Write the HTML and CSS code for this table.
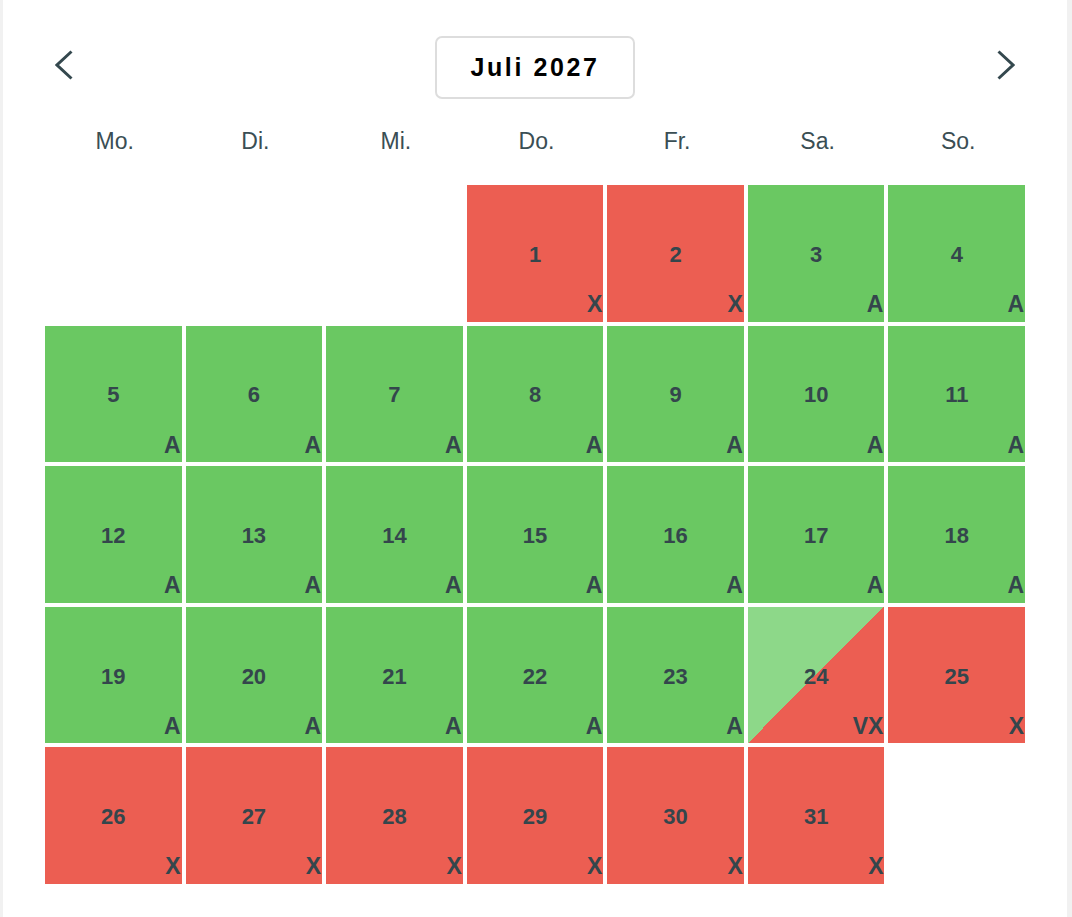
FILE: index.html
```html
<!DOCTYPE html>
<html lang="de">
<head>
<meta charset="utf-8">
<title>Kalender Juli 2027</title>
<link rel="stylesheet" href="styles.css">
</head>
<body>
<div class="card">
  <div class="header">
    <button class="nav" aria-label="Vorheriger Monat">
      <svg width="18" height="30" viewBox="0 0 18 30"><polyline points="16.5,1.5 2,15 16.5,28.5" fill="none" stroke="#34484e" stroke-width="3"/></svg>
    </button>
    <div class="month">Juli 2027</div>
    <button class="nav" aria-label="Nächster Monat">
      <svg width="18" height="30" viewBox="0 0 18 30"><polyline points="1.5,1.5 16,15 1.5,28.5" fill="none" stroke="#34484e" stroke-width="3"/></svg>
    </button>
  </div>
  <div class="weekdays">
    <div>Mo.</div><div>Di.</div><div>Mi.</div><div>Do.</div><div>Fr.</div><div>Sa.</div><div>So.</div>
  </div>
  <div class="grid">
    <div class="empty"></div><div class="empty"></div><div class="empty"></div>
    <div class="day red"><span class="num">1</span><span class="tag">X</span></div>
    <div class="day red"><span class="num">2</span><span class="tag">X</span></div>
    <div class="day green"><span class="num">3</span><span class="tag">A</span></div>
    <div class="day green"><span class="num">4</span><span class="tag">A</span></div>
    <div class="day green"><span class="num">5</span><span class="tag">A</span></div>
    <div class="day green"><span class="num">6</span><span class="tag">A</span></div>
    <div class="day green"><span class="num">7</span><span class="tag">A</span></div>
    <div class="day green"><span class="num">8</span><span class="tag">A</span></div>
    <div class="day green"><span class="num">9</span><span class="tag">A</span></div>
    <div class="day green"><span class="num">10</span><span class="tag">A</span></div>
    <div class="day green"><span class="num">11</span><span class="tag">A</span></div>
    <div class="day green"><span class="num">12</span><span class="tag">A</span></div>
    <div class="day green"><span class="num">13</span><span class="tag">A</span></div>
    <div class="day green"><span class="num">14</span><span class="tag">A</span></div>
    <div class="day green"><span class="num">15</span><span class="tag">A</span></div>
    <div class="day green"><span class="num">16</span><span class="tag">A</span></div>
    <div class="day green"><span class="num">17</span><span class="tag">A</span></div>
    <div class="day green"><span class="num">18</span><span class="tag">A</span></div>
    <div class="day green"><span class="num">19</span><span class="tag">A</span></div>
    <div class="day green"><span class="num">20</span><span class="tag">A</span></div>
    <div class="day green"><span class="num">21</span><span class="tag">A</span></div>
    <div class="day green"><span class="num">22</span><span class="tag">A</span></div>
    <div class="day green"><span class="num">23</span><span class="tag">A</span></div>
    <div class="day split"><span class="num">24</span><span class="tag">VX</span></div>
    <div class="day red"><span class="num">25</span><span class="tag">X</span></div>
    <div class="day red"><span class="num">26</span><span class="tag">X</span></div>
    <div class="day red"><span class="num">27</span><span class="tag">X</span></div>
    <div class="day red"><span class="num">28</span><span class="tag">X</span></div>
    <div class="day red"><span class="num">29</span><span class="tag">X</span></div>
    <div class="day red"><span class="num">30</span><span class="tag">X</span></div>
    <div class="day red"><span class="num">31</span><span class="tag">X</span></div>
    <div class="empty"></div>
  </div>
</div>
</body>
</html>
```
FILE: styles.css
```css
html, body {
  margin: 0;
  padding: 0;
  background: #f1f1f1;
  height: 100%;
}
body {
  font-family: "Liberation Sans", Arial, sans-serif;
}
.card {
  box-sizing: border-box;
  width: 1064px;
  margin-left: 3px;
  min-height: 100%;
  background: #ffffff;
  padding: 36px 42px 0 42px;
}
.header {
  display: flex;
  justify-content: space-between;
  align-items: center;
  padding: 0 10px;
}
.nav {
  background: none;
  border: none;
  padding: 0;
  margin: 0;
  width: 18px;
  height: 30px;
  display: flex;
  margin-top: -6px;
}
.month {
  box-sizing: border-box;
  width: 200px;
  height: 63px;
  border: 2px solid #dddddd;
  border-radius: 7px;
  display: flex;
  align-items: center;
  justify-content: center;
  font-size: 25px;
  font-weight: bold;
  letter-spacing: 2.6px;
  color: #000000;
  padding-left: 0;
}
.weekdays {
  display: grid;
  grid-template-columns: repeat(7, 1fr);
  gap: 4px;
  margin-top: 27px;
  line-height: 30px;
  font-size: 23px;
  color: #3a4e54;
  text-align: center;
}
.weekdays div {
  padding-left: 3px;
}
.grid {
  display: grid;
  grid-template-columns: repeat(7, 1fr);
  gap: 4px;
  margin-top: 29px;
}
.day {
  position: relative;
  aspect-ratio: 1 / 1;
  display: flex;
  align-items: center;
  justify-content: center;
  color: #34464c;
  font-weight: bold;
}
.num {
  font-size: 22px;
  padding-top: 3px;
}
.tag {
  position: absolute;
  right: 1px;
  bottom: 4px;
  font-size: 23px;
  line-height: 1.15;
}
.green {
  background: #6ac862;
}
.red {
  background: #ec5e52;
}
.split {
  background: linear-gradient(to bottom right, #8dd889 50%, #ec5e52 50%);
}
```
